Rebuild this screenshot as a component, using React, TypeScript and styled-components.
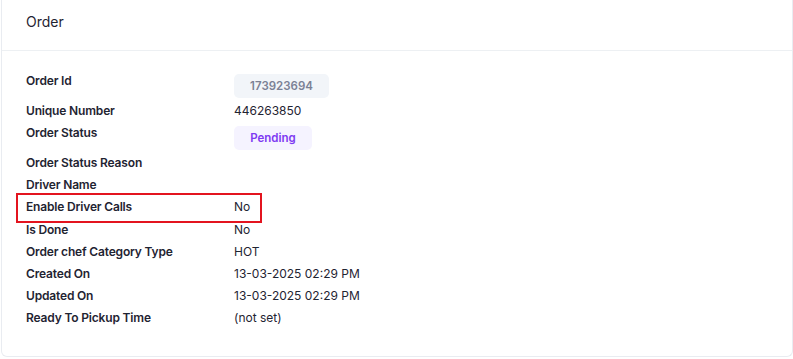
import React from "react";
import styled, { createGlobalStyle } from "styled-components";

const Global = createGlobalStyle`
  html, body { margin: 0; padding: 0; background: #ffffff; }
  body { font-family: Inter, "Noto Sans", sans-serif; color: #1f2432; }
`;

const Card = styled.div`
  margin-left: 1px;
  height: 357px;
  box-sizing: border-box;
  background: #fff;
  border: 1px solid #e9ecf1;
  border-top: none;
  border-radius: 0 0 6px 6px;
`;

const Header = styled.div`
  height: 51px;
  box-sizing: border-box;
  padding: 0 24px 8px;
  display: flex;
  align-items: center;
  border-bottom: 1px solid #edf0f3;
  font-size: 14px;
  color: #1f2432;
`;

const Body = styled.div`
  padding: 19px 24px 0;
  display: flex;
  flex-direction: column;
`;

const Row = styled.div<{ $extra?: boolean }>`
  position: relative;
  display: grid;
  grid-template-columns: 208px 1fr;
  padding: 2px 0 ${(p) => (p.$extra ? 3 : 2)}px;
  align-items: start;
`;

const Label = styled.div`
  font-size: 12px;
  line-height: 18px;
  font-weight: 600;
  letter-spacing: -0.17px;
  color: #1f2432;
`;

const Value = styled.div`
  font-size: 12px;
  line-height: 18px;
  color: #1f2432;
`;

const Badge = styled.span<{ $bg: string; $fg: string; $w: number }>`
  display: inline-flex;
  align-items: center;
  justify-content: center;
  margin-top: 2px;
  height: 24px;
  width: ${(p) => p.$w}px;
  border-radius: 5px;
  background: ${(p) => p.$bg};
  color: ${(p) => p.$fg};
  font-size: 11.5px;
  font-weight: 600;
`;

const Highlight = styled.div`
  position: absolute;
  left: -10px;
  width: 246px;
  top: -3px;
  bottom: -4px;
  border: 2px solid #e3141f;
  box-sizing: border-box;
  pointer-events: none;
`;

type Item = { label: string; value?: string; badge?: "id" | "status"; highlight?: boolean };

const items: Item[] = [
  { label: "Order Id", value: "173923694", badge: "id" },
  { label: "Unique Number", value: "446263850" },
  { label: "Order Status", value: "Pending", badge: "status" },
  { label: "Order Status Reason", value: "" },
  { label: "Driver Name", value: "" },
  { label: "Enable Driver Calls", value: "No", highlight: true },
  { label: "Is Done", value: "No" },
  { label: "Order chef Category Type", value: "HOT" },
  { label: "Created On", value: "13-03-2025 02:29 PM" },
  { label: "Updated On", value: "13-03-2025 02:29 PM" },
  { label: "Ready To Pickup Time", value: "(not set)" },
];

export default function App() {
  return (
    <>
      <Global />
      <Card>
        <Header>Order</Header>
        <Body>
          {items.map((it) => (
            <Row key={it.label} $extra={it.highlight}>
              <Label>{it.label}</Label>
              <div>
                {it.badge === "id" ? (
                  <Badge $bg="#f2f5f9" $fg="#7b8195" $w={95}>{it.value}</Badge>
                ) : it.badge === "status" ? (
                  <Badge $bg="#f5f3ff" $fg="#7e3af2" $w={78}>{it.value}</Badge>
                ) : (
                  <Value>{it.value || "\u00a0"}</Value>
                )}
              </div>
              {it.highlight && <Highlight />}
            </Row>
          ))}
        </Body>
      </Card>
    </>
  );
}
